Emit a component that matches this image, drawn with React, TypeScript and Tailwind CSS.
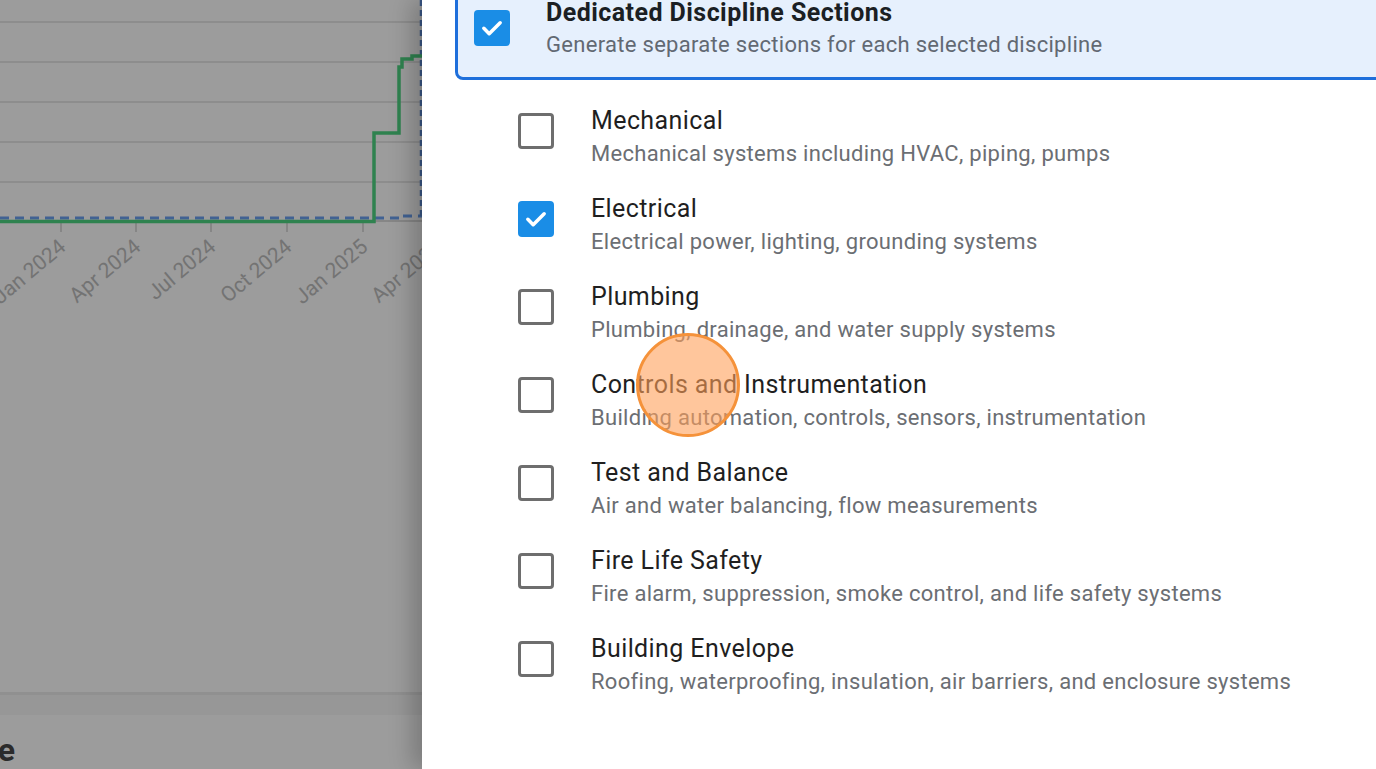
import React from 'react'

const disciplines = [
  { name: 'Mechanical', desc: 'Mechanical systems including HVAC, piping, pumps', checked: false },
  { name: 'Electrical', desc: 'Electrical power, lighting, grounding systems', checked: true },
  { name: 'Plumbing', desc: 'Plumbing, drainage, and water supply systems', checked: false },
  { name: 'Controls and Instrumentation', desc: 'Building automation, controls, sensors, instrumentation', checked: false },
  { name: 'Test and Balance', desc: 'Air and water balancing, flow measurements', checked: false },
  { name: 'Fire Life Safety', desc: 'Fire alarm, suppression, smoke control, and life safety systems', checked: false },
  { name: 'Building Envelope', desc: 'Roofing, waterproofing, insulation, air barriers, and enclosure systems', checked: false },
]

const ticks = [
  { x: 61, label: 'Jan 2024' },
  { x: 136, label: 'Apr 2024' },
  { x: 211, label: 'Jul 2024' },
  { x: 287, label: 'Oct 2024' },
  { x: 363, label: 'Jan 2025' },
  { x: 438, label: 'Apr 2025' },
]

function Checkbox({ checked }: { checked: boolean }) {
  if (checked) {
    return (
      <div className="w-9 h-9 shrink-0 rounded-[4px] bg-[#1a8de6] flex items-center justify-center">
        <svg width="28" height="28" viewBox="0 0 24 24" fill="none">
          <path d="M5 12.3l4.6 4.6L19 7.5" stroke="white" strokeWidth="3" strokeLinecap="round" strokeLinejoin="round" />
        </svg>
      </div>
    )
  }
  return <div className="w-9 h-9 shrink-0 rounded-[4px] border-[3px] border-[#6e6e6e] bg-white" />
}

function Chart() {
  return (
    <svg width="520" height="320" className="block">
      {[22, 62, 102, 142, 182].map((y) => (
        <line key={y} x1="0" x2="520" y1={y} y2={y} stroke="#dedede" strokeWidth="1.5" />
      ))}
      <line x1="0" x2="520" y1="221" y2="221" stroke="#cfcfcf" strokeWidth="1.5" />
      {ticks.map((t) => (
        <g key={t.x}>
          <line x1={t.x} x2={t.x} y1="221" y2="232" stroke="#cfcfcf" strokeWidth="1.5" />
          <text
            x={t.x + 6}
            y="249"
            fontSize="21"
            fill="#bdbdbd"
            textAnchor="end"
            fontFamily="Roboto, sans-serif"
            transform={`rotate(-40 ${t.x + 6} 249)`}
          >
            {t.label}
          </text>
        </g>
      ))}
      <path
        d="M0 218 H400 V216 H430"
        fill="none"
        stroke="#6aa0f0"
        strokeWidth="3"
        strokeDasharray="9 6"
      />
      <line x1="421" x2="421" y1="0" y2="218" stroke="#5f8fdc" strokeWidth="2.5" strokeDasharray="6 4" />
      <path
        d="M0 221.5 H374 V133 H399 V67 H402 V59 H412 V56 H440"
        fill="none"
        stroke="#4dd482"
        strokeWidth="3.5"
      />
    </svg>
  )
}

export default function App() {
  return (
    <div className="relative h-[769px] w-full overflow-hidden bg-white" style={{ fontFamily: 'Roboto, "Noto Sans", sans-serif' }}>
      {/* page behind the drawer */}
      <div className="flex flex-col h-full">
        <div className="h-[695px] bg-white border-b-[3px] border-[#ececec]">
          <Chart />
        </div>
        <div className="h-[20px] bg-[#f7f7f7]" />
        <div className="pt-[16px] flex">
          <div className="w-[15px] overflow-hidden flex justify-end">
            <span className="whitespace-nowrap text-[32px] font-bold text-[#474747] leading-[38px]">Schedule</span>
          </div>
        </div>
      </div>

      {/* backdrop */}
      <div className="absolute inset-0 bg-black/[0.39]" />

      {/* drawer */}
      <div className="absolute top-0 bottom-0 right-0 w-[954px] bg-white shadow-[-10px_0_22px_rgba(0,0,0,0.22)] overflow-hidden">
        <div className="pl-[33px] mr-[-40px]">
          <div className="mt-[-21px] rounded-lg border-[3px] border-[#1e6fdb] bg-[#e6f0fd] px-4 pt-4 pb-[16px] flex items-start gap-9">
            <div className="mt-3">
              <Checkbox checked />
            </div>
            <div className="flex flex-col">
              <span className="text-[25px] leading-[30px] font-bold tracking-[0.45px] text-[#1b1f24]">Dedicated Discipline Sections</span>
              <span className="mt-[1px] text-[22px] leading-[32px] tracking-[0.3px] text-[#626973]">Generate separate sections for each selected discipline</span>
            </div>
          </div>

          <div className="mt-[25px] pl-[63px] flex flex-col gap-[23px]">
            {disciplines.map((d) => (
              <div key={d.name} className="flex items-start gap-[37px]">
                <div className="mt-2">
                  <Checkbox checked={d.checked} />
                </div>
                <div className="flex flex-col">
                  <span className="text-[25px] leading-[32px] tracking-[0.4px] text-[#1f1f1f]">{d.name}</span>
                  <span className="mt-[1px] text-[22px] leading-[32px] tracking-[0.3px] text-[#6b6e73]">{d.desc}</span>
                </div>
              </div>
            ))}
          </div>
        </div>
      </div>

      {/* click indicator */}
      <div className="absolute left-[636px] top-[333px] w-[104px] h-[104px] rounded-full border-[3px] border-[#f5923a] bg-[#ffa05a]/60" />
    </div>
  )
}
